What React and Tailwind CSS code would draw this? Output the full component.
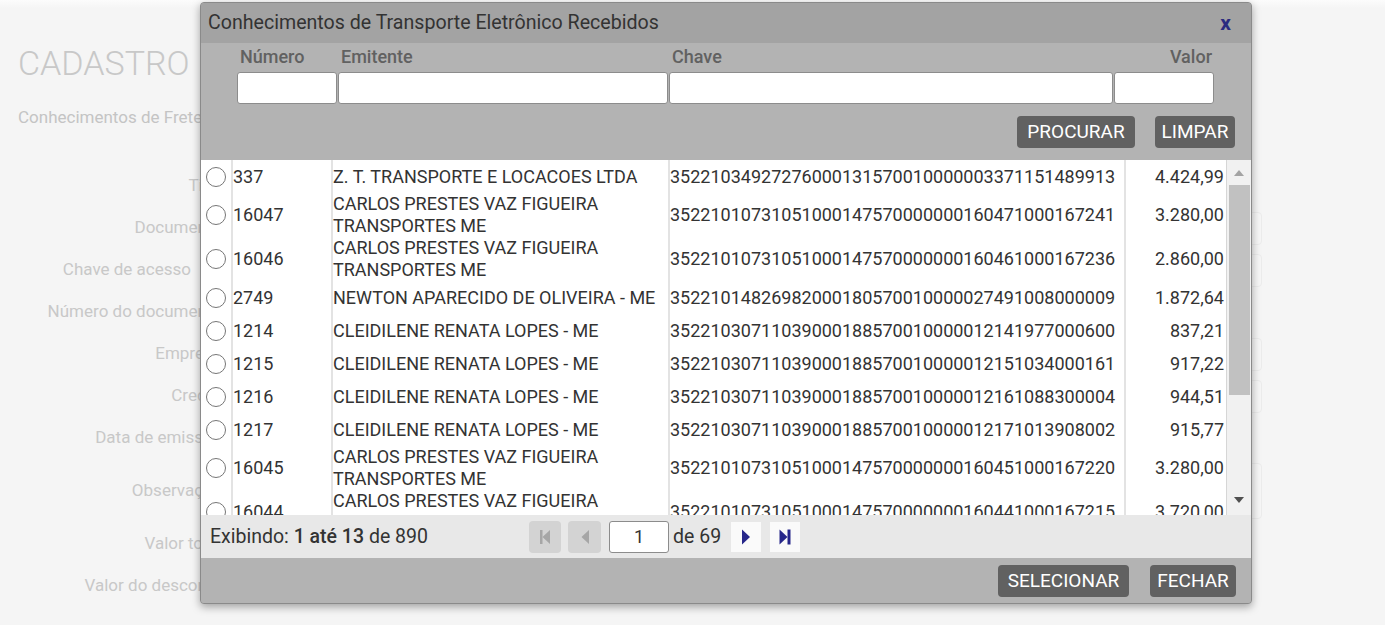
import React from "react";

const ROWS = [
  { num: "337", emit: ["Z. T. TRANSPORTE E LOCACOES LTDA"], chave: "35221034927276000131570010000003371151489913", valor: "4.424,99" },
  { num: "16047", emit: ["CARLOS PRESTES VAZ FIGUEIRA", "TRANSPORTES ME"], chave: "35221010731051000147570000000160471000167241", valor: "3.280,00" },
  { num: "16046", emit: ["CARLOS PRESTES VAZ FIGUEIRA", "TRANSPORTES ME"], chave: "35221010731051000147570000000160461000167236", valor: "2.860,00" },
  { num: "2749", emit: ["NEWTON APARECIDO DE OLIVEIRA - ME"], chave: "35221014826982000180570010000027491008000009", valor: "1.872,64" },
  { num: "1214", emit: ["CLEIDILENE RENATA LOPES - ME"], chave: "35221030711039000188570010000012141977000600", valor: "837,21" },
  { num: "1215", emit: ["CLEIDILENE RENATA LOPES - ME"], chave: "35221030711039000188570010000012151034000161", valor: "917,22" },
  { num: "1216", emit: ["CLEIDILENE RENATA LOPES - ME"], chave: "35221030711039000188570010000012161088300004", valor: "944,51" },
  { num: "1217", emit: ["CLEIDILENE RENATA LOPES - ME"], chave: "35221030711039000188570010000012171013908002", valor: "915,77" },
  { num: "16045", emit: ["CARLOS PRESTES VAZ FIGUEIRA", "TRANSPORTES ME"], chave: "35221010731051000147570000000160451000167220", valor: "3.280,00" },
  { num: "16044", emit: ["CARLOS PRESTES VAZ FIGUEIRA", "TRANSPORTES ME"], chave: "35221010731051000147570000000160441000167215", valor: "3.720,00" },
];

// label, has wide input behind the modal, row height, label right padding
const FORM = [
  ["Tipo", false, 42, 0],
  ["Documento", true, 42, 0],
  ["Chave de acesso", true, 42, 31],
  ["Número do documento", false, 42, 0],
  ["Empresa", true, 42, 0],
  ["Credor", true, 42, 0],
  ["Data de emissão", false, 42, 0],
  ["Observação", true, 64, 0],
  ["Valor total", false, 42, 0],
  ["Valor do desconto", false, 42, 0],
];

const btn = "h-[32px] rounded-[4px] bg-[#616161] text-white text-[19px] text-center leading-[32px]";

function PageIcon({ kind, color }) {
  return (
    <svg width="14" height="18" viewBox="0 0 14 18">
      {kind === "first" && (
        <>
          <rect x="2" y="2" width="2.5" height="14" fill={color} />
          <path d="M12 2 L4.5 9 L12 16 Z" fill={color} />
        </>
      )}
      {kind === "prev" && <path d="M11 2 L3.5 9 L11 16 Z" fill={color} />}
      {kind === "next" && <path d="M3 1.5 L11 9 L3 16.5 Z" fill={color} />}
      {kind === "last" && (
        <>
          <path d="M1.5 1.5 L9.5 9 L1.5 16.5 Z" fill={color} />
          <rect x="9.5" y="1.5" width="3" height="15" fill={color} />
        </>
      )}
    </svg>
  );
}

export default function App() {
  return (
    <div className="relative w-full h-[625px] overflow-hidden bg-[#f5f5f5] text-[#333]" style={{ fontFamily: "Roboto, 'Liberation Sans', sans-serif" }}>
      {/* page behind the modal */}
      <div className="h-[8px] bg-gradient-to-b from-[#fcfcfc] to-[#f5f5f5]" />
      <div className="pl-[18px] pt-[35px]">
        <h1 className="text-[34px] leading-[40px] font-light text-[#c8c8c8] whitespace-nowrap">CADASTRO DE CONHECIMENTO DE FRETE</h1>
        <p className="mt-[24px] text-[17px] leading-[20px] text-[#c4c4c4] whitespace-nowrap">Conhecimentos de Frete</p>
      </div>
      <div className="mt-[38px] flex flex-col">
        {FORM.map(([label, wide, h, pr]) => (
          <div key={label} className="flex items-center" style={{ height: h }}>
            <div className="w-[222px] text-right text-[17px] text-[#c8c8c8] whitespace-nowrap" style={{ paddingRight: pr }}>{label}</div>
            {wide && (
              <div className={`ml-[18px] w-[1022px] rounded-[4px] border border-[#ececec] bg-[#f6f6f6] ${h > 42 ? "h-[56px]" : "h-[33px]"}`} />
            )}
          </div>
        ))}
      </div>

      {/* modal */}
      <div className="absolute left-[200px] top-[2px] w-[1052px] flex flex-col rounded-[4px] border border-[#8a8a8a] bg-[#b3b3b3] shadow-[0_3px_8px_rgba(0,0,0,0.35)] overflow-hidden">
        <div className="h-[40px] bg-[#a3a3a3] flex items-center justify-between pl-[7px] pr-[20px]">
          <span className="text-[19.6px] text-[#333]">Conhecimentos de Transporte Eletrônico Recebidos</span>
          <span className="text-[21px] font-bold text-[#2b2b80] leading-none">x</span>
        </div>

        <div className="h-[117px] bg-[#b3b3b3] pl-[36px] pt-[4px]">
          <div className="flex gap-[1px] text-[18px] leading-[20px] font-medium text-[#616161]">
            <div className="w-[100px] pl-[3px]">Número</div>
            <div className="w-[330px] pl-[3px]">Emitente</div>
            <div className="w-[444px] pl-[3px]">Chave</div>
            <div className="w-[100px] pr-[2px] text-right">Valor</div>
          </div>
          <div className="mt-[5px] flex gap-[1px]">
            <input className="w-[100px] h-[32px] rounded-[3px] border border-[#8c8c8c] bg-white outline-none" />
            <input className="w-[330px] h-[32px] rounded-[3px] border border-[#8c8c8c] bg-white outline-none" />
            <input className="w-[444px] h-[32px] rounded-[3px] border border-[#8c8c8c] bg-white outline-none" />
            <input className="w-[100px] h-[32px] rounded-[3px] border border-[#8c8c8c] bg-white outline-none" />
          </div>
          <div className="mt-[12px] flex justify-end gap-[20px] pr-[16px]">
            <button className={`${btn} w-[118px]`}>PROCURAR</button>
            <button className={`${btn} w-[80px]`}>LIMPAR</button>
          </div>
        </div>

        <div className="h-[355px] bg-white flex overflow-hidden">
          <table className="table-fixed border-collapse w-[1025px] text-[18px] leading-[22px] text-[#333] self-start">
            <colgroup>
              <col className="w-[31px]" />
              <col className="w-[100px]" />
              <col className="w-[337px]" />
              <col className="w-[456px]" />
              <col className="w-[101px]" />
            </colgroup>
            <tbody>
              {ROWS.map((r) => (
                <tr key={r.num} className="h-[33px]">
                  <td className="border-r-2 border-[#e3e3e3] p-0 align-middle">
                    <div className="ml-[5px] w-[20px] h-[20px] rounded-full border border-[#767676] bg-white" />
                  </td>
                  <td className="border-r-2 border-[#e3e3e3] p-0 align-middle whitespace-nowrap">{r.num}</td>
                  <td className="border-r-2 border-[#e3e3e3] p-0 align-middle whitespace-nowrap">
                    {r.emit.map((l) => (
                      <div key={l}>{l}</div>
                    ))}
                  </td>
                  <td className="border-r-2 border-[#e3e3e3] p-0 align-middle whitespace-nowrap">{r.chave}</td>
                  <td className="p-0 pr-[2px] text-right align-middle whitespace-nowrap">{r.valor}</td>
                </tr>
              ))}
            </tbody>
          </table>
          <div className="w-[25px] flex-none bg-[#f1f1f1] border-l border-[#d6d6d6] flex flex-col items-center">
            <div className="h-[25px] flex items-center justify-center">
              <svg width="10" height="6" viewBox="0 0 10 6"><path d="M0 6 L5 0 L10 6 Z" fill="#a3a3a3" /></svg>
            </div>
            <div className="w-[21px] h-[210px] bg-[#c1c1c1]" />
            <div className="flex-1" />
            <div className="h-[30px] flex items-center justify-center">
              <svg width="10" height="6" viewBox="0 0 10 6"><path d="M0 0 L10 0 L5 6 Z" fill="#505050" /></svg>
            </div>
          </div>
        </div>

        <div className="h-[43px] bg-[#e8e8e8] flex items-center pl-[9px] text-[19.5px] text-[#333]">
          <span className="w-[319px] whitespace-nowrap">
            Exibindo: <span className="font-medium">1 até 13</span> de 890
          </span>
          <div className="flex items-center">
            <div className="w-[32px] h-[32px] rounded-[4px] bg-[#d3d3d3] flex items-center justify-center"><PageIcon kind="first" color="#a6a6a6" /></div>
            <div className="ml-[7px] w-[33px] h-[32px] rounded-[4px] bg-[#d3d3d3] flex items-center justify-center"><PageIcon kind="prev" color="#a6a6a6" /></div>
            <input defaultValue="1" className="ml-[8px] w-[60px] h-[32px] rounded-[3px] border border-[#8c8c8c] bg-white text-center text-[18px] outline-none" />
            <span className="ml-[4px]">de 69</span>
            <div className="ml-[10px] w-[30px] h-[30px] bg-[#fafafa] flex items-center justify-center"><PageIcon kind="next" color="#26268a" /></div>
            <div className="ml-[9px] w-[30px] h-[30px] bg-[#fafafa] flex items-center justify-center"><PageIcon kind="last" color="#26268a" /></div>
          </div>
        </div>

        <div className="h-[45px] bg-[#b3b3b3] flex items-center justify-end gap-[21px] pr-[15px]">
          <button className={`${btn} w-[131px]`}>SELECIONAR</button>
          <button className={`${btn} w-[86px]`}>FECHAR</button>
        </div>
      </div>
    </div>
  );
}
